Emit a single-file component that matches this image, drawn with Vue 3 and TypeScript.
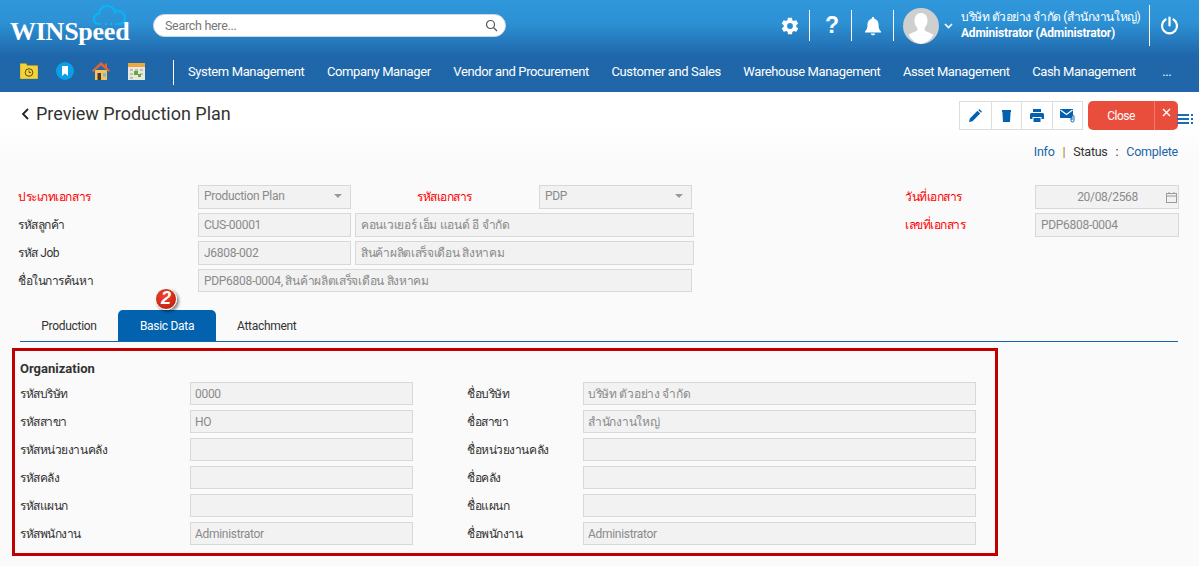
<script setup lang="ts">
const menus: string[] = ['System Management', 'Company Manager', 'Vendor and Procurement', 'Customer and Sales', 'Warehouse Management', 'Asset Management', 'Cash Management', '...']
const tabs: string[] = ['Production', 'Basic Data', 'Attachment']
const orgRows: { l1: string; v1: string; l2: string; v2: string }[] = [
  { l1: 'รหัสบริษัท', v1: '0000', l2: 'ชื่อบริษัท', v2: 'บริษัท ตัวอย่าง จำกัด' },
  { l1: 'รหัสสาขา', v1: 'HO', l2: 'ชื่อสาขา', v2: 'สำนักงานใหญ่' },
  { l1: 'รหัสหน่วยงานคลัง', v1: '', l2: 'ชื่อหน่วยงานคลัง', v2: '' },
  { l1: 'รหัสคลัง', v1: '', l2: 'ชื่อคลัง', v2: '' },
  { l1: 'รหัสแผนก', v1: '', l2: 'ชื่อแผนก', v2: '' },
  { l1: 'รหัสพนักงาน', v1: 'Administrator', l2: 'ชื่อพนักงาน', v2: 'Administrator' },
]
</script>

<template>
  <div class="page">
    <header class="head">
      <div class="top">
        <div class="logo">
          <span class="brand">WINSpeed</span>
          <svg class="cloud" width="33" height="22" viewBox="0 0 33 22" fill="none" stroke="#08b4f5" stroke-width="2.200">
            <path d="M8 20H6C2 20 1 17 1 15c0-3 2-5 5-5 0-5 4-8 8-8 4 0 7 2 8 6 1-1 2-1 3-1 4 0 7 3 7 7 0 3-2 6-6 6h-1" />
            <path d="M12 20h2M17 20h2M22 20h2" />
          </svg>
        </div>
        <div class="search">
          <span>Search here...</span>
          <svg width="13" height="13" viewBox="0 0 13 13" fill="none" stroke="#555" stroke-width="1.2"><circle cx="5.5" cy="5.5" r="4" /><path d="M8.5 8.5l3.5 3.5" /></svg>
        </div>
        <div class="tools">
          <div class="tool t-gear">
            <svg width="20" height="20" viewBox="0 0 24 24" fill="#fff"><path d="M19.4 13c.1-.3.1-.7.1-1s0-.7-.1-1l2.1-1.6c.2-.2.2-.4.1-.6l-2-3.5c-.1-.2-.4-.3-.6-.2l-2.5 1c-.5-.4-1.1-.7-1.7-1l-.4-2.6c0-.3-.2-.5-.5-.5h-4c-.3 0-.5.2-.5.4l-.4 2.7c-.6.2-1.2.6-1.7 1l-2.5-1c-.2-.1-.5 0-.6.2l-2 3.5c-.1.2-.1.5.1.6L4.500 11c0 .3-.1.7-.1 1s0 .7.1 1l-2.1 1.6c-.2.2-.2.4-.1.6l2 3.5c.1.2.4.3.6.2l2.5-1c.5.4 1.1.7 1.7 1l.4 2.7c0 .2.2.4.5.4h4c.3 0 .5-.2.5-.4l.4-2.7c.6-.2 1.2-.6 1.7-1l2.5 1c.2.1.5 0 .6-.2l2-3.5c.1-.2.1-.5-.1-.6L19.4 13zM12 15.500a3.500 3.500 0 110-7 3.500 3.500 0 010 7z" /></svg>
          </div>
          <div class="tool t-help"><span class="q">?</span></div>
          <div class="tool t-bell">
            <svg width="18" height="20" viewBox="0 0 18 20" fill="#fff"><path d="M9 1c-.8 0-1.300.6-1.300 1.300v.5C5 3.500 3.500 5.800 3.500 8.500c0 3.500-.8 5.500-2.500 7v1h16v-1c-1.700-1.500-2.500-3.500-2.500-7 0-2.700-1.500-5-4.200-5.700v-.5C10.300 1.600 9.800 1 9 1zM6.800 17.500c0 1 1 1.800 2.200 1.800s2.200-.8 2.200-1.800z" /></svg>
          </div>
          <div class="avatar">
            <svg width="36" height="36" viewBox="0 0 36 36"><circle cx="18" cy="18" r="18" fill="#cfcfcf" /><path d="M18 5c-4 0-6.500 3-6.500 7.500 0 3 1 5.500 2.800 7.200v2.500c-1 1.300-5.800 2.500-8.800 4.500A18 18 0 0018 36a18 18 0 0012.500-9.300c-3-2-7.800-3.200-8.800-4.500v-2.500c1.800-1.700 2.800-4.200 2.800-7.200C24.500 8 22 5 18 5z" fill="#fff" /></svg>
          </div>
          <svg class="chev" width="9" height="6" viewBox="0 0 9 6" fill="none" stroke="#fff" stroke-width="1.600"><path d="M1 1l3.500 3.500L8 1" /></svg>
          <div class="user">
            <div>บริษัท ตัวอย่าง จำกัด (สำนักงานใหญ่)</div>
            <div>Administrator (Administrator)</div>
          </div>
          <div class="power">
            <svg width="19" height="19" viewBox="0 0 19 19" fill="none" stroke="#fff" stroke-width="2.200" stroke-linecap="round"><path d="M9.500 1.500v8" /><path d="M5.500 3.500a7.500 7.500 0 108 0" /></svg>
          </div>
        </div>
      </div>
      <nav class="nav">
        <div class="quick">
          <svg width="18" height="16" viewBox="0 0 18 16"><path d="M0 1.500C0 1 .4.500 1 .500h5l1.500 2H17c.6 0 1 .4 1 1V15c0 .6-.4 1-1 1H1c-.6 0-1-.4-1-1z" fill="#f4d23a" stroke="#b79a18" stroke-width=".6" /><circle cx="9" cy="9.500" r="3.800" fill="none" stroke="#5c4a10" stroke-width="1" /><path d="M9 7.500v2h2" stroke="#5c4a10" fill="none" stroke-width=".9" /></svg>
          <svg width="18" height="18" viewBox="0 0 18 18"><circle cx="9" cy="9" r="9" fill="#0a9fe6" /><path d="M6 4h6v10l-3-2.500L6 14z" fill="#fff" /></svg>
          <svg width="18" height="18" viewBox="0 0 18 18"><path d="M3 8h12v10H3z" fill="#f6c25d" /><path d="M5.500 11h3.500v7H5.500z" fill="#4a3a2a" /><path d="M11 11h3v3.500h-3z" fill="#7eb7d8" /><path d="M9 0L0 8.500 1.300 10 9 3.500 16.700 10 18 8.500 15 5.700V1.500h-2.200v2.100z" fill="#e8632c" /></svg>
          <svg width="17" height="17" viewBox="0 0 17 17"><path d="M0 0h17v17H0z" fill="#e8e8e0" /><path d="M0 0h17v4H0z" fill="#f0a640" /><path d="M2 6h3v2H2zM7 6h3v2H7zM12 6h3v2h-3zM2 10h3v2H2zM12 10h3v2h-3zM2 14h3v2H2z" fill="#b8c4b0" /><path d="M6 8h4v4H6zM10 11h3v3h-3z" fill="#66a83a" /></svg>
        </div>
        <div class="menu">
          <a v-for="m in menus" :key="m">{{ m }}</a>
        </div>
      </nav>
    </header>

    <main class="body">
      <div class="titlebar">
        <h1 class="title">
          <svg width="8" height="12" viewBox="0 0 8 12" fill="none" stroke="#222" stroke-width="1.800"><path d="M7 1L2 6l5 5" /></svg>
          <span>Preview Production Plan</span>
        </h1>
        <div class="actions">
          <div class="group">
            <button class="ib w32">
              <svg width="13" height="13" viewBox="0 0 13 13" fill="#0561ad"><path d="M0 13l.8-3.500L8.500 1.800l2.700 2.700L3.500 12.200zM9.300 1l1-1 2.700 2.700-1 1z" /></svg>
            </button>
            <button class="ib w30">
              <svg width="9" height="12" viewBox="0 0 9 12" fill="#0561ad"><path d="M0 0h9v2H8.600L8 12H1L.4 2H0z" /></svg>
            </button>
            <button class="ib w31">
              <svg width="14" height="13" viewBox="0 0 14 13" fill="#0561ad"><path d="M3 0h8v3H3zM1.500 4h11c.8 0 1.500.7 1.500 1.500V10h-2.500V8h-9v2H0V5.500C0 4.700.7 4 1.500 4zM3.500 9h7v4h-7z" /></svg>
            </button>
            <button class="ib w29">
              <svg width="15" height="14" viewBox="0 0 15 14"><path d="M0 0h13v9H0z" fill="#0561ad" /><path d="M.5 1l6 4.500 6-4.500" fill="none" stroke="#fff" stroke-width="1.200" /><path d="M11 7.500v4a1.500 1.500 0 003 0V7.500a1 1 0 00-2 0V11" fill="#fff" stroke="#0561ad" stroke-width="1" /></svg>
            </button>
          </div>
          <div class="close">
            <span class="close-text">Close</span>
            <span class="close-x">
              <svg width="9" height="9" viewBox="0 0 9 9" stroke="#fff" stroke-width="1.400"><path d="M1 1l7 7M8 1l-7 7" /></svg>
            </span>
          </div>
          <svg class="listicon" width="16" height="10" viewBox="0 0 16 10" fill="#1b6cb5"><path d="M0 0h12v2H0zM0 4h12v2H0zM0 8h12v2H0zM14 0h2v2h-2zM14 4h2v2h-2zM14 8h2v2h-2z" /></svg>
        </div>
      </div>

      <div class="info">
        <span class="blue">Info</span><span class="bar">|</span><span>Status</span><span class="colon">:</span><span class="blue">Complete</span>
      </div>

      <section class="form">
        <div class="row">
          <label class="lbl req">ประเภทเอกสาร</label>
          <div class="fld sel w153"><span>Production Plan</span><i class="caret"></i></div>
          <label class="lbl req lbl2">รหัสเอกสาร</label>
          <div class="fld sel w153"><span>PDP</span><i class="caret"></i></div>
          <label class="lbl req lbl3">วันที่เอกสาร</label>
          <div class="fld date">
            <span>20/08/2568</span>
            <svg width="11" height="11" viewBox="0 0 11 11" fill="none" stroke="#9a9a9a"><rect x=".5" y="1.500" width="10" height="9" /><path d="M.5 4h10M3 0v2M8 0v2" /></svg>
          </div>
        </div>
        <div class="row">
          <label class="lbl">รหัสลูกค้า</label>
          <div class="fld w153">CUS-00001</div>
          <div class="fld wname">คอนเวเยอร์ เอ็ม แอนด์ อี จำกัด</div>
          <label class="lbl req lbl4">เลขที่เอกสาร</label>
          <div class="fld w144">PDP6808-0004</div>
        </div>
        <div class="row">
          <label class="lbl">รหัส Job</label>
          <div class="fld w153">J6808-002</div>
          <div class="fld wname">สินค้าผลิตเสร็จเดือน สิงหาคม</div>
        </div>
        <div class="row short">
          <label class="lbl">ชื่อในการค้นหา</label>
          <div class="fld wsearch">PDP6808-0004, สินค้าผลิตเสร็จเดือน สิงหาคม</div>
        </div>
      </section>

      <div class="tabs">
        <div v-for="t in tabs" :key="t" class="tab" :class="{ active: t === 'Basic Data' }">
          {{ t }}
          <span v-if="t === 'Basic Data'" class="badge">2</span>
        </div>
      </div>

      <section class="org">
        <h2 class="org-title">Organization</h2>
        <div class="org-grid">
          <template v-for="r in orgRows" :key="r.l1">
            <label class="lbl">{{ r.l1 }}</label>
            <div class="fld">{{ r.v1 }}</div>
            <label class="lbl">{{ r.l2 }}</label>
            <div class="fld">{{ r.v2 }}</div>
          </template>
        </div>
      </section>
    </main>
  </div>
</template>

<style scoped>
.page {
  width: 1199px;
  height: 566px;
  overflow: hidden;
  font-family: Roboto, "Noto Sans", "DejaVu Sans", sans-serif;
  font-size: 12px;
  color: #333;
  background: #fafafa;
}
.head {
  height: 92px;
  background: linear-gradient(#2f97da 0, #2d92d5 22px, #1f67aa 56px, #2066a8 92px);
  color: #fff;
}
.top {
  height: 50px;
  display: flex;
  align-items: flex-start;
}
.logo {
  width: 153px;
  height: 50px;
  position: relative;
  flex: none;
}
.cloud {
  position: absolute;
  left: 93px;
  top: 4px;
}
.brand {
  position: absolute;
  left: 10px;
  top: 15px;
  font-family: "Liberation Serif", serif;
  font-weight: 700;
  font-size: 26px;
  line-height: 34px;
  letter-spacing: -.25px;
}
.search {
  width: 353px;
  height: 23px;
  margin-top: 14px;
  box-sizing: border-box;
  background: #fff;
  border: 1px solid #cfd6dc;
  border-radius: 12px;
  display: flex;
  align-items: center;
  justify-content: space-between;
  padding: 0 7px 0 11px;
  color: #777;
  font-size: 12.500px;
  letter-spacing: -.3px;
}
.tools {
  margin-left: auto;
  display: flex;
  align-items: flex-start;
  height: 50px;
}
.tool {
  height: 31px;
  margin-top: 10px;
  display: flex;
  align-items: center;
  justify-content: center;
  border-right: 1px solid #fff;
  box-sizing: content-box;
}
.t-gear { width: 39px; }
.t-help { width: 41px; }
.t-help .q { margin-left: 3px; }
.t-bell { width: 41px; }
.q {
  font-family: "Liberation Sans", sans-serif;
  font-weight: 700;
  font-size: 23px;
  line-height: 31px;
}
.avatar {
  margin: 8px 0 0 9px;
  width: 36px;
  height: 36px;
}
.chev {
  margin: 23px 0 0 5px;
}
.user {
  margin: 9px 0 0 8px;
  width: 188px;
  font-size: 12px;
  letter-spacing: -.48px;
  line-height: 16px;
  white-space: nowrap;
}
.user div + div {
  font-weight: 700;
  letter-spacing: -.2px;
}
.power {
  width: 50px;
  height: 41px;
  margin-top: 5px;
  border-left: 1px solid #fff;
  display: flex;
  align-items: center;
  padding-left: 10px;
  box-sizing: border-box;
}
.nav {
  height: 42px;
  display: flex;
  align-items: flex-start;
}
.quick {
  display: flex;
  align-items: center;
  gap: 18px;
  margin: 12px 0 0 20px;
  width: 153px;
  height: 18px;
  flex: none;
}
.menu {
  height: 25px;
  margin-top: 10px;
  border-left: 1px solid #fff;
  padding-left: 14px;
  padding-bottom: 2px;
  box-sizing: border-box;
  display: flex;
  align-items: center;
  gap: 22.500px;
  font-size: 13px;
  letter-spacing: -.38px;
  white-space: nowrap;
}
.menu a:last-child { margin-left: 4px; }
.body {
  height: 474px;
  background: linear-gradient(#fff 0, #fff 35px, #fafafa 70px);
}
.titlebar {
  height: 38px;
  display: flex;
  justify-content: space-between;
  align-items: flex-start;
  padding: 9px 21px 0 21px;
  box-sizing: content-box;
}
.title {
  margin: 0;
  display: flex;
  align-items: center;
  gap: 7px;
  font-weight: 400;
  font-size: 18px;
  line-height: 26px;
  color: #333;
}
.actions {
  position: relative;
  display: flex;
  gap: 5px;
}
.group {
  display: flex;
  height: 29px;
  border: 1px solid #ddd;
  box-sizing: border-box;
  background: #fff;
}
.ib {
  border: 0;
  border-right: 1px solid #ddd;
  background: transparent;
  padding: 0;
  display: flex;
  align-items: center;
  justify-content: center;
}
.ib:last-child { border-right: 0; }
.w32 { width: 32px; }
.w30 { width: 30px; }
.w31 { width: 31px; }
.w29 { width: 29px; }
.close {
  width: 90px;
  height: 29px;
  background: #e94e3d;
  border-radius: 5px;
  color: #fff;
  display: flex;
  box-sizing: border-box;
}
.close-text {
  width: 66px;
  text-align: center;
  line-height: 31px;
  font-size: 12px;
  letter-spacing: -.5px;
}
.close-x {
  flex: 1;
  border-left: 1px solid #f37b6d;
  display: flex;
  justify-content: center;
  padding-top: 7px;
  box-sizing: border-box;
}
.listicon {
  position: absolute;
  right: -15px;
  top: 13px;
}
.info {
  display: flex;
  justify-content: flex-end;
  padding-right: 21px;
  margin-top: 5px;
  line-height: 16px;
  font-size: 12.500px;
  letter-spacing: -.25px;
  color: #333;
}
.blue { color: #1a64a8; }
.bar { margin: 0 8px; color: #a07a20; }
.colon { margin: 0 8px; }
.form {
  margin-top: 25px;
  padding-left: 18px;
  display: flex;
  flex-direction: column;
  gap: 4px;
}
.row {
  display: flex;
  height: 24px;
  align-items: flex-start;
  gap: 4px;
}
.row.short { height: 23px; }
.lbl {
  font-size: 12px;
  letter-spacing: -.44px;
  line-height: 25px;
  color: #333;
  white-space: nowrap;
}
.row .lbl:first-child {
  width: 176px;
}
.row .req { color: #f00; }
.row .lbl2 {
  width: 118px;
  margin-left: 62px;
}
.row .lbl3 {
  width: 126px;
  margin-left: 209px;
}
.row .lbl4 {
  width: 126px;
  margin-left: 207px;
}
.fld {
  box-sizing: border-box;
  height: 100%;
  background: #f2f2f2;
  border: 1px solid #d8d8d8;
  color: #8a8a8a;
  font-size: 12px;
  letter-spacing: -.3px;
  line-height: 22px;
  padding: 0 5px;
  white-space: nowrap;
  overflow: hidden;
}
.w153 { width: 153px; }
.w144 { width: 144px; }
.wname { width: 339px; }
.wsearch { width: 494px; }
.sel {
  display: flex;
  justify-content: space-between;
  align-items: center;
  padding-bottom: 2px;
}
.caret {
  width: 0;
  height: 0;
  border-left: 4px solid transparent;
  border-right: 4px solid transparent;
  border-top: 4px solid #999;
  margin-right: 3px;
}
.date {
  width: 144px;
  display: flex;
  align-items: center;
  justify-content: flex-end;
  gap: 28px;
  padding-right: 1px;
}
.tabs {
  position: relative;
  margin: 18px 21px 0 20px;
  height: 32px;
  display: flex;
  border-bottom: 1px solid #1366ad;
  box-sizing: border-box;
}
.tab {
  position: relative;
  padding: 0 21px;
  line-height: 32px;
  font-size: 12px;
  letter-spacing: -.3px;
  color: #333;
  height: 31px;
}
.tab:first-child { width: 98px; box-sizing: border-box; text-align: center; }
.tab.active {
  background: #0262ae;
  color: #fff;
  border-radius: 5px 5px 0 0;
  width: 98px;
  box-sizing: border-box;
  text-align: center;
  padding: 0;
}
.badge {
  position: absolute;
  left: 37px;
  top: -22px;
  width: 22px;
  height: 22px;
  box-sizing: border-box;
  border-radius: 50%;
  background: radial-gradient(circle at 40% 35%, #f0442e, #b5160a);
  border: 1.500px solid #f4f4f4;
  box-shadow: 2px 2px 3px rgba(0, 0, 0, .45);
  color: #fff;
  font-family: "Liberation Sans", sans-serif;
  font-weight: 700;
  font-style: italic;
  font-size: 18px;
  letter-spacing: 0;
  line-height: 19px;
  text-align: center;
}
.org {
  margin: 6px 0 0 12px;
  width: 986px;
  height: 208px;
  box-sizing: border-box;
  border: 3px solid #c00000;
  padding: 8px 5px 0;
}
.org-title {
  margin: 0;
  font-size: 13px;
  line-height: 20px;
  font-weight: 700;
  color: #333;
}
.org-grid {
  margin-top: 3px;
  display: grid;
  grid-template-columns: 170px 223px 54px 116px 393px;
  grid-auto-rows: 23px;
  row-gap: 5px;
}
.org-grid .lbl { line-height: 25px; }
.org-grid .lbl:nth-child(4n+3) {
  grid-column: 4;
}
.org-grid .fld { height: 23px; line-height: 22px; padding: 0 4px; }
</style>
